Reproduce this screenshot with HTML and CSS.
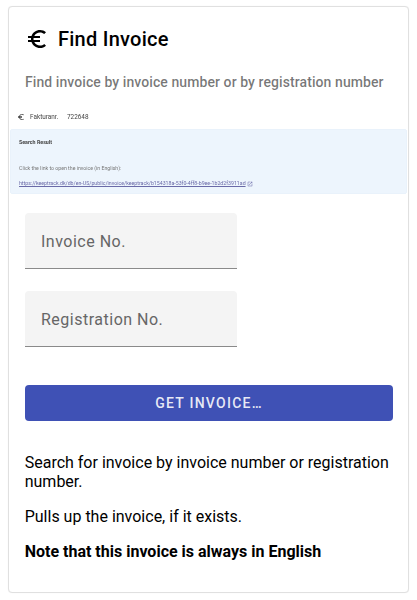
FILE: index.html
```html
<!DOCTYPE html>
<html lang="en">
<head>
<meta charset="utf-8">
<title>Find Invoice</title>
<link rel="stylesheet" href="styles.css">
</head>
<body>
<main class="card">
  <header class="card-header">
    <svg class="euro-icon" viewBox="0 0 24 24" aria-hidden="true"><path d="M15 18.5c-2.51 0-4.68-1.42-5.76-3.5H15v-2H8.58c-.05-.33-.08-.66-.08-1s.03-.67.08-1H15V9H9.24C10.32 6.92 12.5 5.5 15 5.5c1.61 0 3.09.59 4.23 1.57L21 5.3C19.41 3.87 17.3 3 15 3c-3.92 0-7.24 2.51-8.48 6H3v2h3.06c-.04.33-.06.66-.06 1s.02.67.06 1H3v2h3.52c1.24 3.49 4.56 6 8.48 6 2.31 0 4.41-.87 6-2.3l-1.78-1.77c-1.13.98-2.6 1.57-4.2 1.57z"/></svg>
    <h1 class="title">Find Invoice</h1>
  </header>
  <p class="subtitle">Find invoice by invoice number or by registration number</p>
  <section class="shot">
    <div class="shot-row">
      <svg class="shot-euro" viewBox="0 0 24 24" aria-hidden="true"><path d="M15 18.5c-2.51 0-4.68-1.42-5.76-3.5H15v-2H8.58c-.05-.33-.08-.66-.08-1s.03-.67.08-1H15V9H9.24C10.32 6.92 12.5 5.5 15 5.5c1.61 0 3.09.59 4.23 1.57L21 5.3C19.41 3.87 17.3 3 15 3c-3.92 0-7.24 2.51-8.48 6H3v2h3.06c-.04.33-.06.66-.06 1s.02.67.06 1H3v2h3.52c1.24 3.49 4.56 6 8.48 6 2.31 0 4.41-.87 6-2.3l-1.78-1.77c-1.13.98-2.6 1.57-4.2 1.57z"/></svg>
      <span class="shot-label">Fakturanr.</span>
      <span class="shot-value">722648</span>
    </div>
    <div class="result">
      <div class="result-title">Search Result</div>
      <div class="result-text">Click the link to open the invoice (in English):</div>
      <div class="result-link"><a class="link" href="#">https://keeptrack.dk/db/en-US/public/invoice/keeptrack/b154318a-53f0-4ff8-b9ee-1b2d2f3911ad</a><svg class="ext-icon" viewBox="0 0 24 24" aria-hidden="true"><path d="M19 19H5V5h7V3H5a2 2 0 0 0-2 2v14a2 2 0 0 0 2 2h14a2 2 0 0 0 2-2v-7h-2v7zM14 3v2h3.59l-9.83 9.83 1.41 1.41L19 6.41V10h2V3h-7z"/></svg></div>
    </div>
  </section>
  <form class="form">
    <label class="field"><input class="field-input" type="text" placeholder="Invoice No."></label>
    <label class="field"><input class="field-input" type="text" placeholder="Registration No."></label>
    <button class="submit" type="button">GET INVOICE…</button>
  </form>
  <section class="notes">
    <p class="note">Search for invoice by invoice number or registration number.</p>
    <p class="note">Pulls up the invoice, if it exists.</p>
    <p class="note note-strong">Note that this invoice is always in English</p>
  </section>
</main>
</body>
</html>
```

FILE: styles.css
```css
* { box-sizing: border-box; }
html, body { margin: 0; padding: 0; background: #fff; }
body { font-family: Roboto, "Liberation Sans", sans-serif; color: #000; padding: 6px 8px 7px; height: 600px; overflow: hidden; }
.card { height: 587px; border: 1px solid #e0e0e0; border-radius: 4px; padding: 16px 1px 0; background: #fff; box-shadow: 0 0 1px rgba(0,0,0,.08); }
.card-header { display: flex; align-items: center; gap: 9px; padding-left: 15px; height: 32px; }
.euro-icon { width: 24px; height: 24px; display: block; flex: none; fill: #000; }
.title { margin: 0; font-size: 20px; font-weight: 500; line-height: 32px; letter-spacing: .25px; }
.subtitle { margin: 15px 0 0; padding-left: 15px; font-size: 14px; font-weight: 500; line-height: 24px; letter-spacing: .08px; color: rgba(0,0,0,.54); white-space: nowrap; }
.shot { margin-top: 12px; filter: blur(.3px); }
.shot-row { display: flex; align-items: center; height: 23px; padding: 0 0 2px 7px; font-size: 6.4px; color: #444; }
.shot-euro { width: 8px; height: 8px; fill: #444; flex: none; margin-right: 5px; }
.shot-label { width: 37px; }
.result { height: 65px; background: #edf5fd; border-radius: 2px; padding: 9px 8px 0; border: 1px solid #e9f2fb; }
.result-title { font-size: 5.3px; font-weight: 700; line-height: 7px; color: #444; }
.result-text { margin-top: 19px; font-size: 5.2px; line-height: 7px; color: #777; }
.result-link { margin-top: 8px; font-size: 5.23px; line-height: 7px; display: flex; align-items: center; white-space: nowrap; }
.link { color: #6a6aa8; text-decoration: underline; }
.ext-icon { width: 6px; height: 6px; fill: #6a6aa8; margin-left: 1px; }
.form { display: flex; flex-direction: column; padding-left: 15px; padding-right: 15px; margin-top: 19px; }
.field { display: block; width: 212px; height: 56px; background: #f4f4f4; border-bottom: 1px solid #8a8a8a; border-radius: 4px 4px 0 0; margin-bottom: 22px; }
.field-input { display: block; width: 100%; height: 100%; padding: 2px 16px 0; border: 0; outline: 0; background: transparent; font: 400 16px Roboto, sans-serif; letter-spacing: .5px; }
.field-input::placeholder { color: #666; opacity: 1; }
.submit { width: 368px; height: 36px; margin-top: 16px; border: 0; border-radius: 4px; background: #3f51b5; color: rgba(255,255,255,.88); font: 500 14px Roboto, sans-serif; letter-spacing: 1.25px; opacity: 1; }
.notes { padding: 31.6px 15px 0 14.7px; }
.note { margin: 0 0 16px; font-size: 16px; line-height: 19.2px; }
.note-strong { font-weight: 700; }
```
